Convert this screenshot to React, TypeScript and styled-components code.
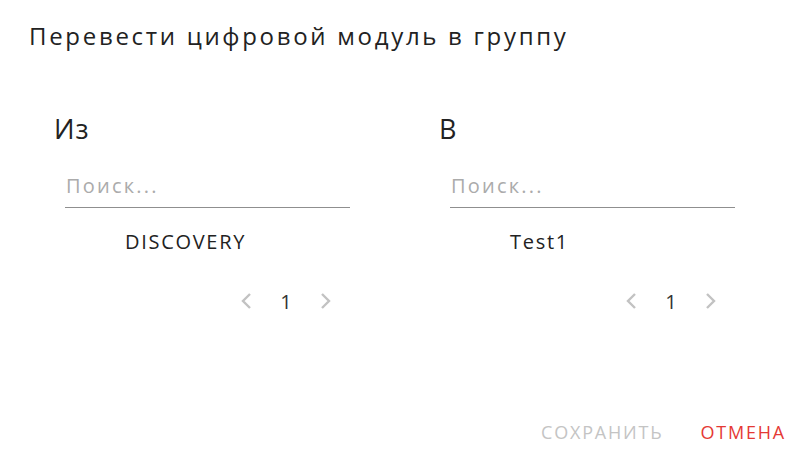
import React from "react";
import styled, { createGlobalStyle } from "styled-components";

const GlobalStyle = createGlobalStyle`
  body {
    margin: 0;
    background: #fff;
    font-family: "Open Sans", "Liberation Sans", sans-serif;
    color: #212121;
  }
`;

const Dialog = styled.div`
  width: 803px;
  height: 456px;
  display: flex;
  flex-direction: column;
  box-sizing: border-box;
`;

const Title = styled.h2`
  margin: 0;
  padding: 20px 0 0 29px;
  font-size: 24px;
  line-height: 32px;
  font-weight: 400;
  letter-spacing: 2.7px;
  color: #222;
`;

const Columns = styled.div`
  display: grid;
  grid-template-columns: 385px 385px;
  padding-left: 54px;
  margin-top: 61px;
`;

const Column = styled.div`
  display: flex;
  flex-direction: column;
`;

const Label = styled.div`
  font-size: 27px;
  line-height: 32px;
  letter-spacing: 1px;
  color: #222;
`;

const SearchInput = styled.input`
  margin: 25px 0 0 11px;
  width: 285px;
  height: 38px;
  box-sizing: border-box;
  border: none;
  border-bottom: 1px solid #8f8f8f;
  outline: none;
  padding: 0 0 6px 1px;
  font-family: inherit;
  font-size: 20px;
  letter-spacing: 2.2px;
  color: #212121;
  background: transparent;
  &::placeholder {
    color: #ababab;
  }
`;

const ListItem = styled.div`
  margin: 9px 0 0 11px;
  padding-left: 60px;
  height: 48px;
  display: flex;
  align-items: center;
  font-size: 20px;
  letter-spacing: 1.7px;
  color: #222;
`;

const Pager = styled.div`
  margin: 16px 0 0 11px;
  width: 281px;
  height: 40px;
  display: flex;
  justify-content: flex-end;
  align-items: center;
`;

const PageCell = styled.div`
  width: 40px;
  height: 40px;
  display: flex;
  align-items: center;
  justify-content: center;
  font-size: 20px;
  color: #333;
`;

const Actions = styled.div`
  margin-top: auto;
  display: flex;
  justify-content: flex-end;
  align-items: center;
  gap: 37px;
  padding: 0 17px 12px 0;
  height: 24px;
`;

const ActionButton = styled.button<{ $tone: "muted" | "danger" }>`
  border: none;
  background: none;
  padding: 0;
  font-family: inherit;
  font-size: 18px;
  text-transform: uppercase;
  letter-spacing: 1.8px;
  color: ${(p) => (p.$tone === "danger" ? "#e53935" : "#c4c4c4")};
  cursor: pointer;
`;

const Chevron = ({ dir }: { dir: "left" | "right" }) => (
  <svg width="12" height="18" viewBox="0 0 12 18">
    <path
      d={dir === "left" ? "M10 2 L3 9 L10 16" : "M2 2 L9 9 L2 16"}
      fill="none"
      stroke="#c2c2c2"
      strokeWidth="2.4"
    />
  </svg>
);

const TransferColumn = ({ label, item }: { label: string; item: string }) => (
  <Column>
    <Label>{label}</Label>
    <SearchInput placeholder="Поиск..." />
    <ListItem>{item}</ListItem>
    <Pager>
      <PageCell>
        <Chevron dir="left" />
      </PageCell>
      <PageCell>1</PageCell>
      <PageCell>
        <Chevron dir="right" />
      </PageCell>
    </Pager>
  </Column>
);

const App = () => (
  <Dialog>
    <GlobalStyle />
    <Title>Перевести цифровой модуль в группу</Title>
    <Columns>
      <TransferColumn label="Из" item="DISCOVERY" />
      <TransferColumn label="В" item="Test1" />
    </Columns>
    <Actions>
      <ActionButton $tone="muted">Сохранить</ActionButton>
      <ActionButton $tone="danger">Отмена</ActionButton>
    </Actions>
  </Dialog>
);

export default App;
